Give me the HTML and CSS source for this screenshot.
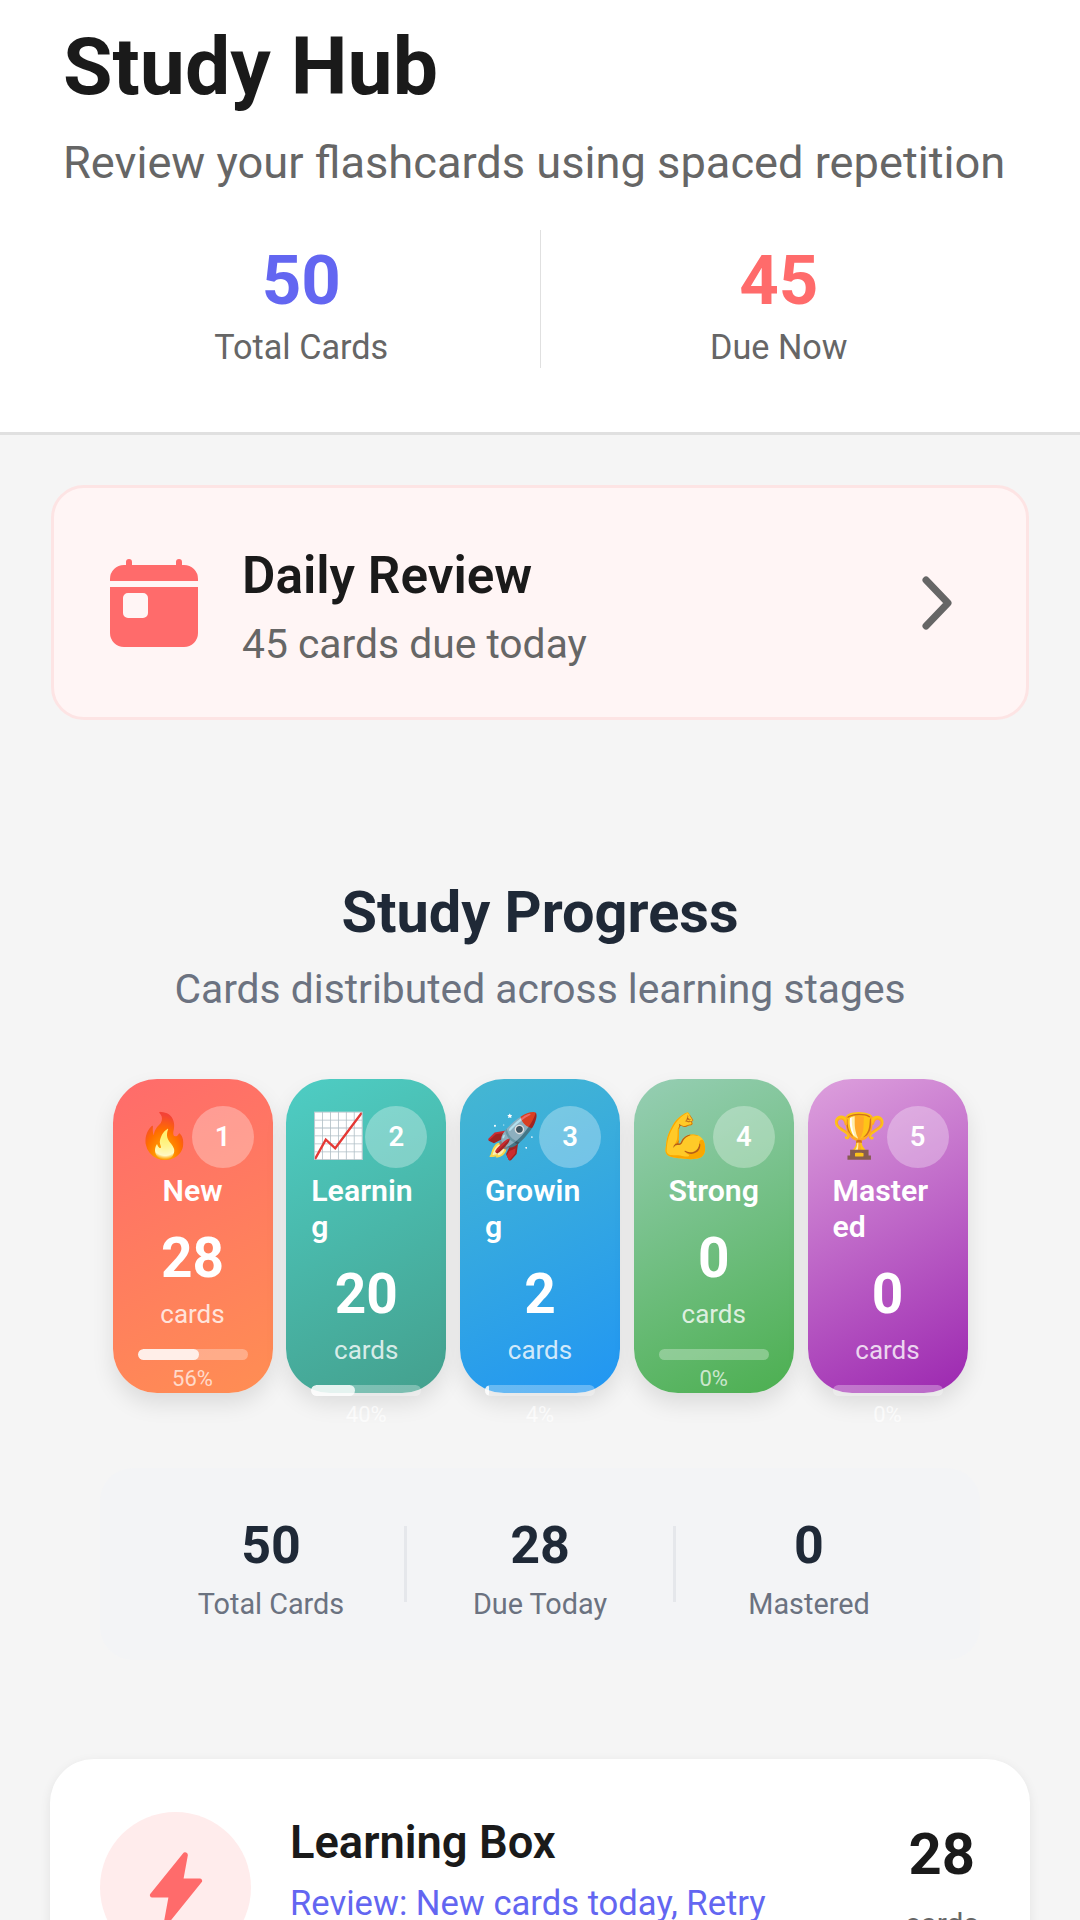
FILE: index.html
```html
<!DOCTYPE html>
<html lang="en">
<head>
    <meta charset="UTF-8">
    <meta name="viewport" content="width=device-width, initial-scale=1.0">
    <title>Study Hub</title>
    <link rel="stylesheet" href="styles.css">
</head>
<body>
    <header class="hub-header">
        <h1>Study Hub</h1>
        <p class="hub-subtitle">Review your flashcards using spaced repetition</p>
        <div class="hub-stats">
            <div class="hub-stat">
                <div class="hub-stat-value total">50</div>
                <div class="hub-stat-label">Total Cards</div>
            </div>
            <div class="hub-stat-divider"></div>
            <div class="hub-stat">
                <div class="hub-stat-value due">45</div>
                <div class="hub-stat-label">Due Now</div>
            </div>
        </div>
    </header>

    <main class="content">
        <div class="daily-card">
            <svg class="daily-icon" viewBox="0 0 88 89">
                <path fill="#ff6b6b" d="M0 23V21A14 14 0 0 1 14 7H16V4A3 3 0 0 1 22 4V7H66V4A3 3 0 0 1 72 4V7H74A14 14 0 0 1 88 21V23Z"/>
                <path fill="#ff6b6b" fill-rule="evenodd" d="M0 29H88V75A14 14 0 0 1 74 89H14A14 14 0 0 1 0 75ZM18 35A5 5 0 0 0 13 40V55A5 5 0 0 0 18 60H33A5 5 0 0 0 38 55V40A5 5 0 0 0 33 35Z"/>
            </svg>
            <div class="daily-text">
                <div class="daily-title">Daily Review</div>
                <div class="daily-sub">45 cards due today</div>
            </div>
            <svg class="daily-chevron" viewBox="0 0 32 54">
                <polyline points="4,4 26,27 4,50" fill="none" stroke="#666" stroke-width="7" stroke-linecap="round" stroke-linejoin="round"/>
            </svg>
        </div>

        <section class="progress">
            <h2>Study Progress</h2>
            <p class="progress-sub">Cards distributed across learning stages</p>

            <div class="stages">
                <div class="stage stage-new">
                    <div class="stage-top"><span class="stage-emoji">🔥</span><span class="stage-badge">1</span></div>
                    <div class="stage-name">New</div>
                    <div class="stage-count">28</div>
                    <div class="stage-unit">cards</div>
                    <div class="stage-bar"><div class="stage-fill" style="width: 56%"></div></div>
                    <div class="stage-pct">56%</div>
                </div>
                <div class="stage stage-learning">
                    <div class="stage-top"><span class="stage-emoji">📈</span><span class="stage-badge">2</span></div>
                    <div class="stage-name">Learning</div>
                    <div class="stage-count">20</div>
                    <div class="stage-unit">cards</div>
                    <div class="stage-bar"><div class="stage-fill" style="width: 40%"></div></div>
                    <div class="stage-pct">40%</div>
                </div>
                <div class="stage stage-growing">
                    <div class="stage-top"><span class="stage-emoji">🚀</span><span class="stage-badge">3</span></div>
                    <div class="stage-name">Growing</div>
                    <div class="stage-count">2</div>
                    <div class="stage-unit">cards</div>
                    <div class="stage-bar"><div class="stage-fill" style="width: 4%"></div></div>
                    <div class="stage-pct">4%</div>
                </div>
                <div class="stage stage-strong">
                    <div class="stage-top"><span class="stage-emoji">💪</span><span class="stage-badge">4</span></div>
                    <div class="stage-name">Strong</div>
                    <div class="stage-count">0</div>
                    <div class="stage-unit">cards</div>
                    <div class="stage-bar"><div class="stage-fill" style="width: 0%"></div></div>
                    <div class="stage-pct">0%</div>
                </div>
                <div class="stage stage-mastered">
                    <div class="stage-top"><span class="stage-emoji">🏆</span><span class="stage-badge">5</span></div>
                    <div class="stage-name">Mastered</div>
                    <div class="stage-count">0</div>
                    <div class="stage-unit">cards</div>
                    <div class="stage-bar"><div class="stage-fill" style="width: 0%"></div></div>
                    <div class="stage-pct">0%</div>
                </div>
            </div>

            <div class="summary">
                <div class="summary-item">
                    <div class="summary-value">50</div>
                    <div class="summary-label">Total Cards</div>
                </div>
                <div class="summary-divider"></div>
                <div class="summary-item">
                    <div class="summary-value">28</div>
                    <div class="summary-label">Due Today</div>
                </div>
                <div class="summary-divider"></div>
                <div class="summary-item">
                    <div class="summary-value">0</div>
                    <div class="summary-label">Mastered</div>
                </div>
            </div>
        </section>

        <div class="box-card">
            <div class="box-icon">
                <svg viewBox="0 0 512 512"><path fill="#ff6b6b" d="M194.82 496a18.36 18.36 0 0 1-18.1-21.53v-.11L204.83 320H96a16 16 0 0 1-12.44-26.06L302.73 23a18.45 18.45 0 0 1 32.8 14.09c0 .07 0 .13-.05.2L307.09 192H416a16 16 0 0 1 12.44 26.06L209.24 489a18.45 18.45 0 0 1-14.42 7z"/></svg>
            </div>
            <div class="box-text">
                <div class="box-title">Learning Box</div>
                <div class="box-sub">Review: New cards today, Retry</div>
            </div>
            <div class="box-count">
                <div class="box-count-value">28</div>
                <div class="box-count-unit">cards</div>
            </div>
        </div>
    </main>
</body>
</html>
```

FILE: styles.css
```css
* {
    box-sizing: border-box;
}

html, body {
    height: 100%;
    overflow: hidden;
}

body {
    margin: 0;
    font-family: Roboto, "Liberation Sans", "Noto Color Emoji", sans-serif;
    background-color: #f5f5f5;
    color: #1a1a1a;
}

/* header */
.hub-header {
    background-color: #fff;
    border-bottom: 3px solid #e0e0e0;
    padding: 20px 63px 64px;
}

.hub-header h1 {
    margin: 0;
    font-size: 80.5px;
    font-weight: 700;
    line-height: 94px;
}

.hub-subtitle {
    margin: 23px 0 41px;
    font-size: 45.2px;
    line-height: 52px;
    color: #666;
}

.hub-stats {
    display: flex;
    height: 138px;
}

.hub-stat {
    flex: 1;
    text-align: center;
    padding-top: 12px;
}

.hub-stat-divider {
    width: 1px;
    background-color: #e0e0e0;
}

.hub-stat-value {
    font-size: 69px;
    font-weight: 700;
    line-height: 77px;
}

.hub-stat-value.total {
    color: #6366f1;
}

.hub-stat-value.due {
    color: #ff6b6b;
}

.hub-stat-label {
    margin-top: 8px;
    font-size: 34.2px;
    line-height: 40px;
    color: #666;
}

.content {
    padding: 50px 50px 0;
}

/* daily review */
.daily-card {
    display: flex;
    align-items: center;
    height: 235px;
    margin: 0 1px;
    padding: 0 72px 0 56px;
    background-color: #fff5f5;
    border: 3px solid #fde4e4;
    border-radius: 33px;
}

.daily-icon {
    width: 88px;
    height: 89px;
    flex-shrink: 0;
    margin-right: 44px;
}

.daily-text {
    flex: 1;
    padding-top: 9px;
}

.daily-title {
    font-size: 51.3px;
    font-weight: 600;
    line-height: 58px;
}

.daily-sub {
    margin-top: 17px;
    font-size: 40.8px;
    line-height: 45px;
    color: #666;
}

.daily-chevron {
    width: 32px;
    height: 54px;
}

/* study progress */
.progress {
    padding-top: 160px;
}

.progress h2 {
    margin: 0;
    font-size: 57.7px;
    font-weight: 700;
    line-height: 65px;
    text-align: center;
    color: #1f2937;
}

.progress-sub {
    margin: 22px 0 67px;
    font-size: 40.8px;
    line-height: 45px;
    text-align: center;
    color: #6b7280;
}

.stages {
    display: flex;
    justify-content: center;
    gap: 13.75px;
}

.stage {
    display: flex;
    flex-direction: column;
    align-items: center;
    width: 160px;
    height: 314px;
    padding: 26px 25px 0;
    border-radius: 44px;
    color: #fff;
    box-shadow: 0 11px 22px rgba(0, 0, 0, 0.1);
}

.stage-new { background: linear-gradient(153deg, #ff6b6b, #ff8e53); }
.stage-learning { background: linear-gradient(153deg, #4ecdc4, #44a08d); }
.stage-growing { background: linear-gradient(153deg, #45b7d1, #2196f3); }
.stage-strong { background: linear-gradient(153deg, #96ceb4, #4caf50); }
.stage-mastered { background: linear-gradient(153deg, #dda0dd, #9c27b0); }

.stage-top {
    display: flex;
    align-items: center;
    align-self: flex-start;
    height: 63px;
}

.stage-emoji {
    width: 54px;
    flex-shrink: 0;
    font-size: 44px;
    line-height: 63px;
    text-align: center;
}

.stage-badge {
    width: 62px;
    height: 62px;
    flex-shrink: 0;
    border-radius: 50%;
    background-color: rgba(255, 255, 255, 0.3);
    font-size: 27.5px;
    font-weight: 600;
    line-height: 62px;
    text-align: center;
}

.stage-name {
    margin-top: 5px;
    max-width: 100%;
    font-size: 30.25px;
    font-weight: 600;
    line-height: 36px;
    overflow-wrap: anywhere;
}

.stage-count {
    margin-top: 17px;
    font-size: 55px;
    font-weight: 700;
    line-height: 64px;
}

.stage-unit {
    margin-top: 9px;
    font-size: 26px;
    line-height: 31px;
    color: rgba(255, 255, 255, 0.8);
}

.stage-bar {
    flex-shrink: 0;
    width: 100%;
    height: 11px;
    margin-top: 19px;
    border-radius: 6px;
    background-color: rgba(255, 255, 255, 0.3);
    overflow: hidden;
}

.stage-fill {
    height: 100%;
    border-radius: 6px;
    background-color: rgba(255, 255, 255, 0.8);
}

.stage-pct {
    margin-top: 6px;
    font-size: 22px;
    line-height: 26px;
    color: rgba(255, 255, 255, 0.7);
}

/* summary */
.summary {
    display: flex;
    align-items: center;
    width: 880px;
    height: 192px;
    margin: 75px auto 0;
    padding: 0 38px;
    background-color: #f3f4f6;
    border-radius: 33px;
}

.summary-item {
    flex: 1;
    padding-top: 6px;
    text-align: center;
}

.summary-divider {
    width: 3px;
    height: 76px;
    background-color: #e5e7eb;
}

.summary-value {
    font-size: 52px;
    font-weight: 700;
    line-height: 61px;
    color: #1f2937;
}

.summary-label {
    margin-top: 12px;
    font-size: 28.8px;
    line-height: 32px;
    color: #6b7280;
}

/* learning box */
.box-card {
    display: flex;
    align-items: flex-start;
    margin-top: 99px;
    padding: 53px 51px 60px 50px;
    background-color: #fff;
    border-radius: 44px;
    box-shadow: 0 3px 11px rgba(0, 0, 0, 0.08);
}

.box-icon {
    display: flex;
    align-items: center;
    justify-content: center;
    width: 151px;
    height: 151px;
    flex-shrink: 0;
    margin-right: 39px;
    border-radius: 50%;
    background-color: #ffecec;
}

.box-icon svg {
    width: 76px;
    height: 76px;
}

.box-text {
    flex: 1;
    padding-top: 5px;
}

.box-title {
    font-size: 45.3px;
    font-weight: 600;
    line-height: 52px;
}

.box-sub {
    margin-top: 9px;
    font-size: 34.6px;
    line-height: 50px;
    color: #6366f1;
}

.box-count {
    padding-top: 8px;
    text-align: center;
}

.box-count-value {
    font-size: 58px;
    font-weight: 700;
    line-height: 68px;
}

.box-count-unit {
    margin-top: 18px;
    font-size: 30px;
    line-height: 36px;
    color: #666;
}
```
